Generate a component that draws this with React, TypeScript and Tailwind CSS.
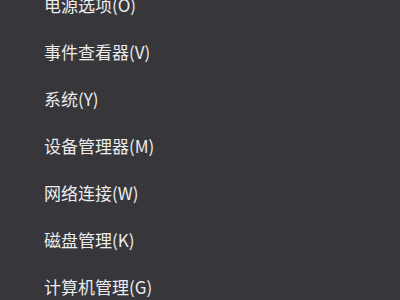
import React from 'react';

const items = [
    '电源选项(O)',
    '事件查看器(V)',
    '系统(Y)',
    '设备管理器(M)',
    '网络连接(W)',
    '磁盘管理(K)',
    '计算机管理(G)',
];

export default function App() {
    return (
        <div className="w-[400px] h-[300px] overflow-hidden bg-[#36363b]">
            <div className="flex flex-col -mt-[19px]">
                {items.map((label) => (
                    <div
                        key={label}
                        className="h-[47px] flex items-center pl-[44px] text-[17px] text-[#ececec]"
                        style={{ fontFamily: '"Noto Sans CJK SC", "Noto Sans", sans-serif' }}
                    >
                        {label}
                    </div>
                ))}
            </div>
        </div>
    );
}
